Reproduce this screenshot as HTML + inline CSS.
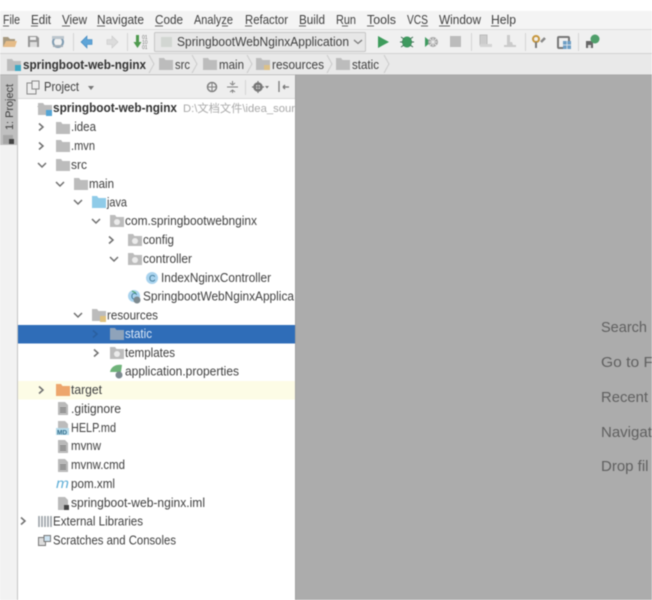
<!DOCTYPE html>
<html><head><meta charset="utf-8"><style>
html,body{margin:0;padding:0;width:652px;height:600px;overflow:hidden;background:#fff}
svg{display:block;filter:blur(.5px)}
text{font-family:"Liberation Sans","Noto Sans CJK SC",sans-serif;font-size:12.5px;fill:#404040}
.g{fill:#606060}
</style></head><body>
<svg width="652" height="600" viewBox="0 0 652 600" xmlns="http://www.w3.org/2000/svg">
<defs>
<g id="f"><path d="M0 0h5l1.500 2H14v10H0z" fill="#bcbcbc"/></g>
<g id="p"><path d="M0 0h5l1.500 2H14v10H0z" fill="#bcbcbc"/><circle cx="7" cy="7" r="3" fill="#ececec"/></g>
<g id="r"><path d="M-4-3.500l4 3.500-4 3.500" fill="none" stroke="#707070" stroke-width="1.500"/></g>
<g id="d"><path d="M-4-2l4 4 4-4" fill="none" stroke="#707070" stroke-width="1.500"/></g>
<g id="t"><path d="M0 0h7l3 3v10H0z" fill="#bababa"/><path d="M2 6h6M2 8h6M2 10h6" stroke="#777" stroke-width="1"/></g>
</defs>

<!-- chrome -->
<rect y="11" width="652" height="18" fill="#f4f4f4"/>
<rect y="29" width="652" height="24" fill="#f0f0f0"/>
<rect y="29" width="652" height="1" fill="#dedede"/>
<rect y="53" width="652" height="22" fill="#e9e9e9"/>
<rect y="53" width="652" height="1" fill="#d2d2d2"/>
<rect y="74.500" width="652" height="1" fill="#a0a0a0"/>
<rect x="295" y="75" width="357" height="525" fill="#acacac"/>
<rect x="0" y="75" width="17" height="525" fill="#f2f2f2"/>
<rect x="0" y="75" width="17" height="70" fill="#c0c0c0"/>
<rect x="17" y="75" width="278" height="525" fill="#fff"/>
<rect x="17" y="75" width="278" height="23" fill="#eeeeee"/>
<rect x="17" y="98" width="278" height="1" fill="#d8d8d8"/>
<rect x="17" y="75" width="1" height="525" fill="#c4c4c4"/>
<rect x="295" y="75" width="1" height="525" fill="#a0a0a0"/>

<!-- menu -->
<text x="3" y="24" textLength="17" lengthAdjust="spacingAndGlyphs">File</text>
<text x="31" y="24" textLength="20" lengthAdjust="spacingAndGlyphs">Edit</text>
<text x="62" y="24" textLength="25" lengthAdjust="spacingAndGlyphs">View</text>
<text x="97" y="24" textLength="47" lengthAdjust="spacingAndGlyphs">Navigate</text>
<text x="155" y="24" textLength="28" lengthAdjust="spacingAndGlyphs">Code</text>
<text x="194" y="24" textLength="39" lengthAdjust="spacingAndGlyphs">Analyze</text>
<text x="245" y="24" textLength="43" lengthAdjust="spacingAndGlyphs">Refactor</text>
<text x="299" y="24" textLength="26" lengthAdjust="spacingAndGlyphs">Build</text>
<text x="336" y="24" textLength="20" lengthAdjust="spacingAndGlyphs">Run</text>
<text x="367" y="24" textLength="29" lengthAdjust="spacingAndGlyphs">Tools</text>
<text x="407" y="24" textLength="21" lengthAdjust="spacingAndGlyphs">VCS</text>
<text x="439" y="24" textLength="42" lengthAdjust="spacingAndGlyphs">Window</text>
<text x="491" y="24" textLength="25" lengthAdjust="spacingAndGlyphs">Help</text>
<path d="M3 26h6M31 26h7M62 26h8M97 26h8M155 26h8M222 26h6M245 26h7M299 26h7M342 26h6M367 26h7M421 26h7M439 26h11M491 26h8" stroke="#666" stroke-width="1"/>

<!-- toolbar -->
<path d="M3 37h5l2 2h5v2H7l-3 6H3z" fill="#a89a80"/><path d="M6 41h11l-2 6H3z" fill="#e6bc88"/>
<path d="M28 36h9l2 2v9H28z" fill="#969696"/><rect x="30" y="37" width="6" height="3" fill="#eee"/><rect x="30" y="42" width="7" height="5" fill="#ddd"/>
<circle cx="58" cy="42" r="5" fill="none" stroke="#7f9cb2" stroke-width="2"/><rect x="52" y="36" width="12" height="3" fill="#bcc5cc"/><rect x="53" y="45" width="10" height="2" fill="#a3aeb6"/>
<rect x="73" y="33" width="1" height="18" fill="#d4d4d4"/>
<path d="M81 42l6-6v3.500h5v5h-5V48z" fill="#5fa5d8" stroke="#3f86bd" stroke-width=".6"/>
<path d="M118 42l-6-6v3.500h-5v5h5V48z" fill="#dcdcdc" stroke="#c8c8c8" stroke-width=".6"/>
<rect x="127" y="33" width="1" height="18" fill="#d4d4d4"/>
<path d="M136 35h3v7h2.500l-4 6-4-6h2.500z" fill="#4f9a4f"/>
<text x="142" y="39" style="font-size:5px;fill:#777">01</text><text x="142" y="44" style="font-size:5px;fill:#777">10</text><text x="142" y="49" style="font-size:5px;fill:#777">01</text>
<rect x="154.500" y="32.500" width="211" height="19" rx="1" fill="#e7e7e7" stroke="#c6c6c6"/>
<path d="M161 37h11v10h-11z" fill="#d2d6d2"/>
<text x="177" y="46" textLength="172" lengthAdjust="spacingAndGlyphs">SpringbootWebNginxApplication</text>
<path d="M354 40l4 3.500 4-3.500" fill="none" stroke="#777" stroke-width="1.200"/>
<path d="M378 36l11 6-11 6z" fill="#3e9c5c"/>
<ellipse cx="407" cy="42" rx="5" ry="5.500" fill="#3f9a5f"/><path d="M401 37l3 2M413 37l-3 2M400 42h3M414 42h-3M401 47l3-2M413 47l-3-2" stroke="#3a6a50" stroke-width="1"/>
<path d="M425 37l6 5-6 5z" fill="#3f9a5f"/><circle cx="433" cy="42" r="5" fill="#a8a8a8"/><path d="M429 38l8 8M437 38l-8 8M429 42h8M433 38v8" stroke="#eee" stroke-width=".8"/>
<rect x="450" y="36" width="11" height="11" fill="#bcbcbc"/>
<rect x="471" y="33" width="1" height="18" fill="#d4d4d4"/>
<path d="M480 35h7v10h-7z" fill="#ccc" stroke="#bbb"/><rect x="480" y="44" width="12" height="3" fill="#d4d4d4"/>
<path d="M507 35h3v7h2l1 3h3v2h-12v-2h3z" fill="#cbcbcb"/>
<rect x="525" y="33" width="1" height="18" fill="#d4d4d4"/>
<circle cx="536" cy="39" r="3" fill="none" stroke="#c6963c" stroke-width="2"/><path d="M536 42v6" stroke="#7a7a7a" stroke-width="2"/><path d="M541 42l4-4" stroke="#888" stroke-width="2.500"/>
<rect x="558" y="37" width="11" height="11" rx="1" fill="none" stroke="#777" stroke-width="2"/><rect x="563" y="41" width="8" height="8" fill="#6d9ec5"/><path d="M567 41v8M563 45h8" stroke="#eee" stroke-width=".7"/>
<rect x="578" y="33" width="1" height="18" fill="#d4d4d4"/>
<path d="M586 41h7v7h-7z" fill="#666"/><rect x="588" y="45" width="3" height="3" fill="#ddd"/><circle cx="595" cy="39" r="4.500" fill="#4f9f6a"/>

<!-- breadcrumbs -->
<use href="#f" x="7" y="59"/><rect x="15" y="65" width="6" height="6" fill="#3fa9c4"/>
<text x="23" y="69" textLength="123" lengthAdjust="spacingAndGlyphs" style="font-weight:bold;fill:#333">springboot-web-nginx</text>
<path d="M149 55l5 9-5 9M192 55l5 9-5 9M247 55l5 9-5 9M327 55l5 9-5 9M384 55l5 9-5 9" fill="none" stroke="#cacaca"/>
<use href="#f" x="159" y="58"/><text x="175" y="69" textLength="15" lengthAdjust="spacingAndGlyphs">src</text>
<use href="#f" x="203" y="58"/><text x="219" y="69" textLength="25" lengthAdjust="spacingAndGlyphs">main</text>
<use href="#f" x="256" y="58"/><rect x="264" y="65" width="6" height="5" fill="#dcc088"/><text x="272" y="69" textLength="52" lengthAdjust="spacingAndGlyphs">resources</text>
<use href="#f" x="336" y="58"/><text x="352" y="69" textLength="27" lengthAdjust="spacingAndGlyphs">static</text>

<!-- left tab -->
<text transform="translate(13,130) rotate(-90)" textLength="46" lengthAdjust="spacingAndGlyphs" style="font-size:11px">1: Project</text>
<rect x="3" y="135" width="10" height="9" fill="#a6a6a6"/><rect x="9" y="139" width="5" height="5" fill="#444"/>

<!-- panel header -->
<rect x="27" y="83" width="9" height="11" fill="none" stroke="#888"/><rect x="32" y="81" width="7" height="8" fill="#eee" stroke="#888"/>
<text x="44" y="91" textLength="35" lengthAdjust="spacingAndGlyphs">Project</text>
<path d="M88 86h6l-3 4z" fill="#777"/>
<circle cx="212" cy="87" r="4.500" fill="none" stroke="#808080" stroke-width="1.500"/><path d="M212 83v8M208 87h8" stroke="#808080" stroke-width="1"/>
<path d="M227 87h11M232.500 81v3M232.500 90v3M230 83l2.500 2 2.500-2M230 92l2.500-2 2.500 2" fill="none" stroke="#808080"/>
<rect x="245" y="80" width="1" height="15" fill="#d4d4d4"/>
<circle cx="258" cy="87" r="3.500" fill="none" stroke="#777" stroke-width="2.500"/><path d="M258 81v12M252 87h12" stroke="#777" stroke-width="1.200"/><path d="M265 86h4l-2 2.500z" fill="#777"/>
<path d="M279 81v11M283 87h6M283 87l2-2M283 87l2 2" fill="none" stroke="#777" stroke-width="1.300"/>

<!-- selection + highlight -->
<rect x="18" y="325" width="277" height="18.500" fill="#2f6db8"/>
<rect x="18" y="381" width="277" height="18.500" fill="#fdfce6"/>

<!-- tree -->
<use href="#d" x="42" y="108"/>
<use href="#f" x="38" y="103"/><rect x="46" y="110" width="6" height="6" fill="#55a5d5"/>
<text x="53" y="112" textLength="124" lengthAdjust="spacingAndGlyphs" style="font-weight:bold;fill:#333">springboot-web-nginx</text>
<text x="183" y="112" textLength="112" lengthAdjust="spacingAndGlyphs" style="font-size:11px;fill:#a8a8a8">D:\文档文件\idea_sour</text>

<use href="#r" x="43" y="127"/><use href="#f" x="56" y="122"/><text x="71" y="131" textLength="25" lengthAdjust="spacingAndGlyphs">.idea</text>
<use href="#r" x="43" y="146"/><use href="#f" x="56" y="140"/><text x="71" y="150" textLength="24" lengthAdjust="spacingAndGlyphs">.mvn</text>
<use href="#d" x="42" y="165"/><use href="#f" x="56" y="159"/><text x="71" y="169" textLength="16" lengthAdjust="spacingAndGlyphs">src</text>
<use href="#d" x="60" y="184"/><use href="#f" x="74" y="178"/><text x="89" y="188" textLength="25" lengthAdjust="spacingAndGlyphs">main</text>
<use href="#d" x="78" y="202"/><path d="M92 196h5l1.500 2H106v10H92z" fill="#8fcbe8"/><text x="107" y="206.500" textLength="20" lengthAdjust="spacingAndGlyphs">java</text>
<use href="#d" x="96" y="221"/><use href="#p" x="110" y="215"/><text x="125" y="225" textLength="132" lengthAdjust="spacingAndGlyphs">com.springbootwebnginx</text>
<use href="#r" x="113" y="240"/><use href="#p" x="128" y="234"/><text x="143" y="244" textLength="31" lengthAdjust="spacingAndGlyphs">config</text>
<use href="#d" x="114" y="259"/><use href="#p" x="128" y="253"/><text x="143" y="263" textLength="49" lengthAdjust="spacingAndGlyphs">controller</text>
<circle cx="152" cy="278" r="6" fill="#a9d3ee"/><text x="149" y="281.500" style="font-size:9px;fill:#35708f">C</text><text x="161" y="282" textLength="110" lengthAdjust="spacingAndGlyphs">IndexNginxController</text>
<circle cx="134" cy="296" r="6" fill="#a9d3ee"/><text x="131" y="299.500" style="font-size:9px;fill:#35708f">C</text><circle cx="137" cy="300" r="3.500" fill="#7d8a90"/><path d="M132 291l4 2" stroke="#4aa36a"/>
<text x="143" y="300.500" textLength="151" lengthAdjust="spacingAndGlyphs">SpringbootWebNginxApplica</text>
<use href="#d" x="78" y="315"/><use href="#f" x="92" y="309"/><rect x="100" y="316" width="6" height="6" fill="#e0c27e"/><text x="107" y="319.500" textLength="51" lengthAdjust="spacingAndGlyphs">resources</text>
<path d="M93 330.500l4 3.500-4 3.500" fill="none" stroke="#2a5f9f" stroke-width="1.500"/><path d="M110 328h5l1.500 2H124v10h-14z" fill="#8fa3ba"/><text x="125" y="338" textLength="27" lengthAdjust="spacingAndGlyphs" style="fill:#dbe7f5">static</text>
<use href="#r" x="98" y="353"/><use href="#p" x="110" y="347"/><text x="125" y="357" textLength="50" lengthAdjust="spacingAndGlyphs">templates</text>
<path d="M110 372c1-6 7-8 12-7l-1 7z" fill="#6fb37a"/><circle cx="119" cy="375" r="3.500" fill="#7d8a90"/><text x="125" y="375.500" textLength="114" lengthAdjust="spacingAndGlyphs">application.properties</text>
<use href="#r" x="43" y="390"/><path d="M56 384h5l1.500 2H70v10H56z" fill="#eda66c"/><text x="71" y="394" textLength="31" lengthAdjust="spacingAndGlyphs">target</text>
<use href="#t" x="58" y="402"/><text x="71" y="413" textLength="50" lengthAdjust="spacingAndGlyphs">.gitignore</text>
<path d="M58 421h7l3 3v4H58z" fill="#bcbcbc"/><rect x="56" y="428" width="13" height="7" fill="#b7dbea"/><text x="57" y="434.500" style="font-size:6.500px;font-weight:bold;fill:#35708f">MD</text><text x="71" y="432" textLength="45" lengthAdjust="spacingAndGlyphs">HELP.md</text>
<use href="#t" x="58" y="440"/><text x="71" y="450" textLength="30" lengthAdjust="spacingAndGlyphs">mvnw</text>
<use href="#t" x="58" y="459"/><text x="71" y="469" textLength="54" lengthAdjust="spacingAndGlyphs">mvnw.cmd</text>
<text x="56" y="488" textLength="13" lengthAdjust="spacingAndGlyphs" style="font-size:14px;font-style:italic;fill:#62b0d8">m</text><text x="71" y="488" textLength="44" lengthAdjust="spacingAndGlyphs">pom.xml</text>
<path d="M58 497h7l3 3v10H58z" fill="#bababa"/><rect x="64" y="505" width="5" height="5" fill="#444"/><text x="71" y="507" textLength="134" lengthAdjust="spacingAndGlyphs">springboot-web-nginx.iml</text>
<use href="#r" x="25" y="521"/><path d="M39 516v11M42 516v11M45 516v11M48 516v11M51 516v11" stroke="#939ba1" stroke-width="1.500"/><text x="53" y="525.500" textLength="90" lengthAdjust="spacingAndGlyphs">External Libraries</text>
<rect x="38.500" y="537.500" width="7" height="8" fill="#ddd" stroke="#777"/><rect x="44" y="535.500" width="6.500" height="6" fill="#cfe4f2" stroke="#777"/><text x="53" y="544.500" textLength="123" lengthAdjust="spacingAndGlyphs">Scratches and Consoles</text>

<!-- editor hints -->
<text class="g" x="601" y="332" style="font-size:15px" textLength="46" lengthAdjust="spacingAndGlyphs">Search</text>
<text class="g" x="601" y="367" style="font-size:15px" textLength="52" lengthAdjust="spacingAndGlyphs">Go to F</text>
<text class="g" x="601" y="402" style="font-size:15px" textLength="47" lengthAdjust="spacingAndGlyphs">Recent</text>
<text class="g" x="601" y="437" style="font-size:15px">Navigat</text>
<text class="g" x="601" y="471" style="font-size:15px">Drop fil</text>
</svg>
</body></html>
